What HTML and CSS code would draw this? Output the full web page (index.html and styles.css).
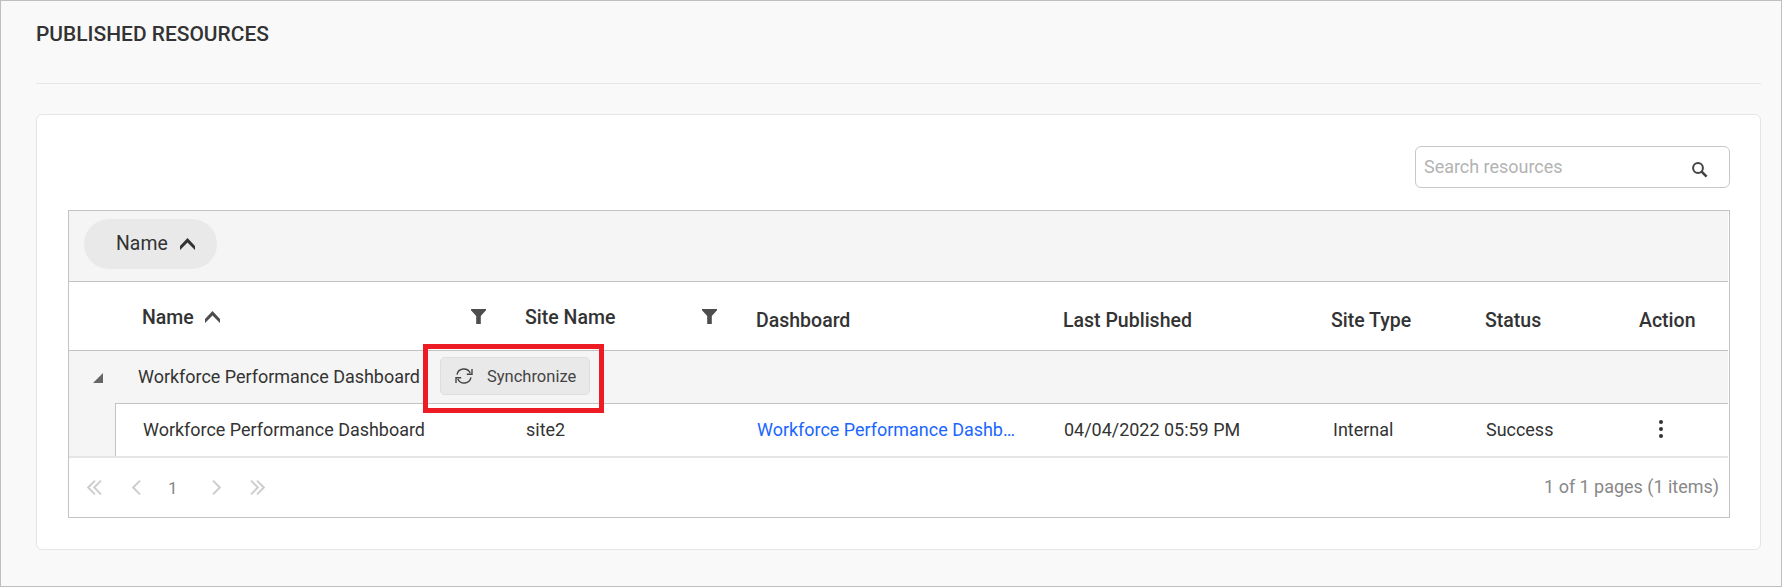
FILE: index.html
```html
<!DOCTYPE html>
<html lang="en">
<head>
<meta charset="utf-8">
<title>Published Resources</title>
<link rel="stylesheet" href="styles.css">
</head>
<body>
<main class="page">
  <header class="page-header"><h1 class="page-title">PUBLISHED RESOURCES</h1></header>
  <section class="card">
    <div class="search">
      <span class="search-text">Search resources</span>
      <svg class="search-icon" width="16" height="16" viewBox="0 0 16 16"><circle cx="6" cy="6" r="4.9" fill="none" stroke="#444" stroke-width="2"/><path d="M9.4 9.4 14.6 14.6" stroke="#444" stroke-width="2.6"/></svg>
    </div>
    <div class="grid">
      <div class="group-area">
        <div class="pill"><span>Name</span><svg width="15" height="12" viewBox="0 0 15 12"><path d="M0 8 7.5 0 15 8V12L7.5 4.6 0 12z" fill="#333"/></svg></div>
      </div>
      <div class="row head">
        <div class="cell name-col raised"><span>Name</span><svg class="sort" width="15" height="12" viewBox="0 0 15 12"><path d="M0 8 7.5 0 15 8V12L7.5 4.6 0 12z" fill="#4d4d4d"/></svg><svg class="filter" width="15" height="15" viewBox="0 0 15 15"><path d="M0 0H15V1.2L9.8 7V15H5.2V7L0 1.2z" fill="#4d4d4d"/></svg></div>
        <div class="cell raised"><span>Site Name</span><svg class="filter" width="15" height="15" viewBox="0 0 15 15"><path d="M0 0H15V1.2L9.8 7V15H5.2V7L0 1.2z" fill="#4d4d4d"/></svg></div>
        <div class="cell">Dashboard</div>
        <div class="cell">Last Published</div>
        <div class="cell">Site Type</div>
        <div class="cell">Status</div>
        <div class="cell">Action</div>
      </div>
      <div class="group-row">
        <svg class="expander" width="10" height="10" viewBox="0 0 10 10"><path d="M10 0V10H0z" fill="#666"/></svg>
        <span class="group-name">Workforce Performance Dashboard</span>
        <div class="highlight">
          <button class="sync"><svg width="18" height="16" viewBox="0 0 18 16" fill="none" stroke="#444" stroke-width="1.4"><path d="M2 6.6A7 7 0 0 1 15.2 5M17 1V6.2H11.8M16 9.4A7 7 0 0 1 2.8 11M1 15V9.8H6.2"/></svg><span>Synchronize</span></button>
        </div>
      </div>
      <div class="row data">
        <div class="indent"></div>
        <div class="cell">Workforce Performance Dashboard</div>
        <div class="cell">site2</div>
        <div class="cell"><a class="link">Workforce Performance Dashb…</a></div>
        <div class="cell">04/04/2022 05:59 PM</div>
        <div class="cell type">Internal</div>
        <div class="cell">Success</div>
        <div class="cell action"><svg width="4" height="18" viewBox="0 0 4 18" fill="#333"><circle cx="2" cy="2" r="2"/><circle cx="2" cy="9" r="2"/><circle cx="2" cy="16" r="2"/></svg></div>
      </div>
      <footer class="pager">
        <div class="pages">
          <svg width="15" height="15" viewBox="0 0 15 15"><path d="M8 .7 1.2 7.5 8 14.3M14 .7 7.2 7.5 14 14.3"/></svg>
          <svg class="prev" width="9" height="15" viewBox="0 0 9 15"><path d="M8 .7 1.2 7.5 8 14.3"/></svg>
          <span class="current">1</span>
          <svg class="next" width="9" height="15" viewBox="0 0 9 15"><path d="M1 .7 7.8 7.5 1 14.3"/></svg>
          <svg class="last" width="15" height="15" viewBox="0 0 15 15"><path d="M1 .7 7.8 7.5 1 14.3M7 .7 13.8 7.5 7 14.3"/></svg>
        </div>
        <span class="count">1 of 1 pages (1 items)</span>
      </footer>
    </div>
  </section>
</main>
</body>
</html>
```
FILE: styles.css
```css
* { box-sizing: border-box; }
body { margin: 0; font-family: Roboto, "Liberation Sans", sans-serif; font-size: 17.97px; color: #333; }
svg { display: block; flex: none; }
.page { height: 587px; padding: 0 20px 0 35px; border: 1px solid #bfbfbf; background: #f9f9f9; }
.page-header { height: 83px; padding-top: 20px; border-bottom: 1px solid #e5e5e5; }
.page-title { margin: 0; font-size: 20.95px; line-height: 26px; font-weight: 500; }
.card { height: 436px; margin-top: 30px; padding: 31px 30px 0 31px; border: 1px solid #e5e5e5; border-radius: 6px; background: #fff; }
.search { display: flex; align-items: center; justify-content: space-between; width: 315px; height: 42px; margin-left: auto; padding: 0 21px 0 8px; border: 1px solid #c8c8c8; border-radius: 6px; color: #b3b3b3; }
.search-text { padding-bottom: 2px; }
.search-icon { margin-top: 5px; }
.grid { height: 308px; margin-top: 22px; padding-right: 1px; border: 1px solid #c3c3c3; }
.group-area { height: 71px; padding: 8px 15px; border-bottom: 1px solid #c3c3c3; background: #f5f5f5; }
.pill { display: flex; align-items: center; gap: 12px; width: 133px; height: 50px; padding: 0 0 1px 32px; border-radius: 25px; background: #e9e9e9; font-size: 19.4px; }
.row { display: grid; grid-template-columns: 47px 383px 231px 307px 268px 154px 154px 1fr; }
.cell { display: flex; align-items: center; padding-left: 27px; white-space: nowrap; overflow: hidden; }
.head { height: 69px; border-bottom: 1px solid #c3c3c3; font-size: 19.5px; font-weight: 500; }
.head .cell { padding: 8px 0 0 26px; }
.head .raised { padding: 1px 13px 0 26px; }
.raised span { padding-top: 1px; }
.name-col { grid-column: 2; }
.sort { margin-left: 11px; }
.filter { margin-left: auto; }
.group-row { display: flex; height: 53px; border-bottom: 1px solid #c3c3c3; background: #f5f5f5; }
.expander { margin: 22px 0 0 24px; }
.group-name { width: 285px; margin-left: 35px; line-height: 51px; white-space: nowrap; }
.highlight { position: relative; z-index: 1; flex: none; width: 181px; height: 69px; margin-top: -7px; padding: 8px 9px 0 12px; border: 5px solid #ed1c24; }
.sync { display: flex; align-items: center; gap: 14px; width: 150px; height: 38px; padding: 0 0 0 14px; border: 1px solid #ddd; border-radius: 5px; background: #e9e9e9; color: #444; font: 16.5px Roboto, "Liberation Sans", sans-serif; }
.data { height: 54px; border-bottom: 2px solid #e5e5e5; }
.data .cell { padding-bottom: 2px; }
.data .type { padding-left: 28px; }
.indent { margin-top: -1px; border-right: 1px solid #c3c3c3; background: #f5f5f5; }
.link { color: #1a66ff; }
.data .action { padding-left: 46px; }
.pager { display: flex; justify-content: space-between; align-items: center; height: 59px; padding: 0 9px 0 18px; color: #888; }
.pages { display: flex; align-items: center; font-size: 17px; }
.pages svg { fill: none; stroke: #ccc; stroke-width: 1.9; }
.prev { margin-left: 30px; }
.current { margin-left: 27px; }
.next { margin-left: 34px; }
.last { margin-left: 29px; }
.count { padding-bottom: 2px; }
```
